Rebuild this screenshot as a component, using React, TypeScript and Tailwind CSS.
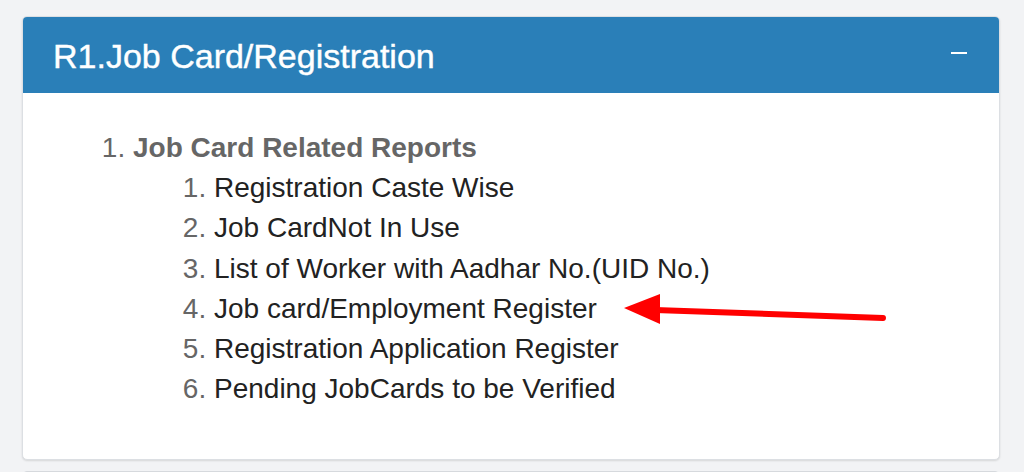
const reports = [
  "Registration Caste Wise",
  "Job CardNot In Use",
  "List of Worker with Aadhar No.(UID No.)",
  "Job card/Employment Register",
  "Registration Application Register",
  "Pending JobCards to be Verified",
];

export default function App() {
  return (
    <div className="relative min-h-[472px] h-[472px] overflow-hidden bg-[#f2f3f5] px-[22px] pt-[16px] font-['Liberation_Sans',Arial,sans-serif]">
      <div className="rounded-[5px] border border-[#dcdfe3] bg-white shadow-[0_1px_2px_rgba(0,0,0,0.12)] w-[978px]">
        <div className="flex h-[76px] items-center justify-between rounded-t-[4px] bg-[#2a7fb8] pl-[30px] pr-[32px]">
          <h3 className="mt-[2px] text-[34px] leading-none text-white [-webkit-text-stroke:0.4px_white]">R1.Job Card/Registration</h3>
          <span className="mt-[-4px] block h-[2px] w-[16px] bg-white" />
        </div>
        <div className="pt-[35px] pb-[50px]">
          <ol className="list-decimal pl-[110px] text-[28px] leading-[40.2px] text-[#666] marker:text-[#666]">
            <li>
              <span className="font-bold">Job Card Related Reports</span>
              <ol className="list-decimal pl-[81px] font-normal text-[#222]">
                {reports.map((r) => (
                  <li key={r} className="marker:text-[#666]">
                    {r}
                  </li>
                ))}
              </ol>
            </li>
          </ol>
        </div>
      </div>
      <div className="mt-[11px] h-[40px] rounded-[5px] border border-[#d6d9dd] bg-[#f7f7f8] w-[978px]" />

      <svg className="pointer-events-none absolute left-0 top-0" width="1024" height="472">
        <line x1="655" y1="310" x2="883" y2="318" stroke="#ff0000" strokeWidth="6" strokeLinecap="round" />
        <polygon points="624,308 660,294 660,324" fill="#ff0000" />
      </svg>
    </div>
  );
}
